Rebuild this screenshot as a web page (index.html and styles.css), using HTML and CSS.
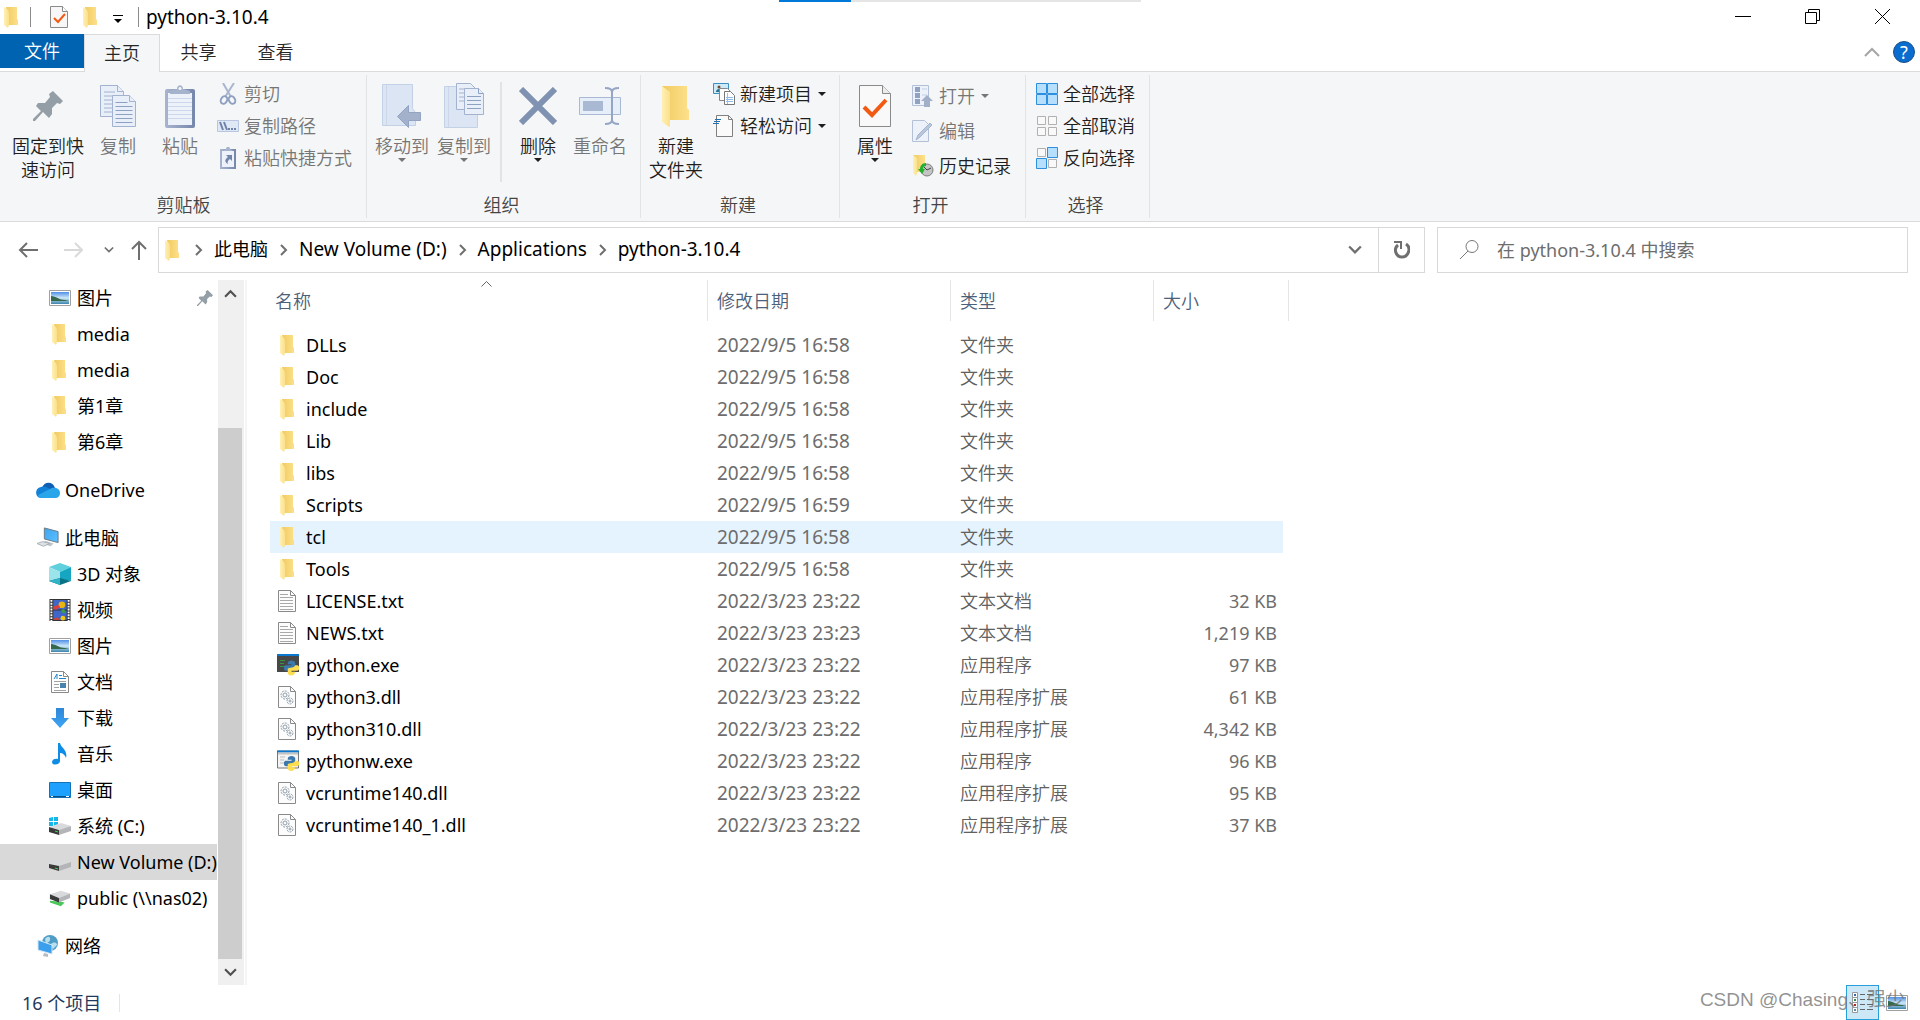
FILE: index.html
```html
<!DOCTYPE html>
<html lang="zh-CN">
<head>
<meta charset="utf-8">
<title>python-3.10.4</title>
<link rel="stylesheet" href="styles.css">
</head>
<body>
<svg class="sprite" aria-hidden="true">
  <defs>
    <linearGradient id="g-back" x1="0" x2="1"><stop offset="0" stop-color="#f0cb62"/><stop offset="1" stop-color="#fde08a"/></linearGradient>
    <linearGradient id="g-flap" x1="0" x2="1"><stop offset="0" stop-color="#fff0b4"/><stop offset="1" stop-color="#fbe08c"/></linearGradient>
    <linearGradient id="g-board" x1="0" x2="1"><stop offset="0" stop-color="#a9b5cf"/><stop offset="1" stop-color="#7486ab"/></linearGradient>
    <linearGradient id="g-sky" x1="0" y1="0" x2="0" y2="1"><stop offset="0" stop-color="#4f8fe6"/><stop offset=".5" stop-color="#cfe8f8"/><stop offset="1" stop-color="#3b84ad"/></linearGradient>
    <linearGradient id="g-screen" x1="0" y1="0" x2="1" y2="1"><stop offset="0" stop-color="#3da5f0"/><stop offset="1" stop-color="#5cc0ff"/></linearGradient>
    <linearGradient id="g-down" x1="0" y1="0" x2="0" y2="1"><stop offset="0" stop-color="#2f86d6"/><stop offset="1" stop-color="#3fa5f5"/></linearGradient>
  </defs>
  <symbol id="folder" viewBox="0 0 14 21"><path d="M2 0h11v12l1 1v5H5z" fill="url(#g-back)"/><path d="M0 0l4 3 1 3v12l-1 3-4-3z" fill="url(#g-flap)"/></symbol>
  <symbol id="folder-lg" viewBox="0 0 30 42"><path d="M1 1h25v22l2 2v10H9z" fill="url(#g-back)"/><path d="M1 1l8 6v34l-1 1-7-5z" fill="url(#g-flap)"/></symbol>
  <symbol id="prop" viewBox="0 0 18 22"><path d="M.5.5h12l5 5v16H.5z" fill="#f7f7f8" stroke="#8a8a8a"/><path d="M12.500.5v5h5" fill="#fff" stroke="#8a8a8a"/><path d="M4 12l4 4 7-8" fill="none" stroke="#f25a13" stroke-width="2"/></symbol>
  <symbol id="prop-lg" viewBox="0 0 32 42"><path d="M.5.5h23l8 8v33H.5z" fill="#f9f9fa" stroke="#8a8a8a"/><path d="M23.500.5v8h8" fill="#ececec" stroke="#8a8a8a"/><path d="M5 22l8 8 14-15" fill="none" stroke="#f25a13" stroke-width="4"/></symbol>
  <symbol id="pin" viewBox="0 0 30 30"><path d="M20 0l10 10-3 3-3-1-5 5v6l-3 4-6-6-8 9-2 0v-2l8-8-5-5 2-3 7 0 5-6-1-3z" fill="#939ea6"/></symbol>
  <symbol id="copy" viewBox="0 0 36 42"><g fill="#e9eff9" stroke="#a3b2cf"><path d="M.5.5h17l6 6v25H.5z"/><path d="M17.500.5v6h6M4 7h11M4 11h11M4 15h8M4 19h8M4 23h8M4 27h8"/><path d="M12.500 10.500h17l6 6v25h-23z"/><path d="M29.500 10.500v6h6"/></g><path d="M15.500 17.500h12M15.500 21.500h17M15.500 25.500h17M15.500 29.500h17M15.500 33.500h17M15.500 37.500h17" stroke="#8fa1c2"/></symbol>
  <symbol id="paste" viewBox="0 0 30 43"><rect y="4" width="30" height="39" rx="2" fill="url(#g-board)"/><path d="M3 8h24v32H3z" fill="#edf2fa"/><path d="M3 13.500h24M3 17.500h24M3 21.500h24M3 25.500h24M3 29.500h24M3 33.500h24" stroke="#cdd9ea"/><path d="M5 9V6l7-2c0-5 6-5 6 0l7 2v3z" fill="#a5b3cc"/><circle cx="15" cy="3.500" r="1.500" fill="#f5f6f7"/></symbol>
  <symbol id="cut" viewBox="0 0 22 22"><g fill="none" stroke="#a9b6d0" stroke-width="2"><path d="M6 0l8 14M17 0L8 14"/><ellipse cx="7" cy="17" rx="3" ry="4" transform="rotate(30 7 17)" stroke="#8fa0c0"/><ellipse cx="15" cy="17" rx="3" ry="4" transform="rotate(-30 15 17)" stroke="#8fa0c0"/></g></symbol>
  <symbol id="path" viewBox="0 0 22 22"><path d="M.5 5.500h21v11H.5z" fill="#dfe8f5" stroke="#b7c5de"/><path d="M3 7l3 8M7 7l3 8" stroke="#6f83aa" stroke-width="2"/><path d="M11 13h2v2h-2zM14 13h2v2h-2zM17 13h2v2h-2z" fill="#6f83aa"/></symbol>
  <symbol id="shortcut" viewBox="0 0 22 22"><path d="M3 2h16v20H3z" fill="url(#g-board)"/><path d="M5 4h12v16H5z" fill="#edf2fa"/><path d="M6 4l3-2c0-3 4-3 4 0l3 2z" fill="#a5b3cc"/><path d="M9 8h6v6l-2-2c-2 1-3 3-2 5-4-2-3-5 0-7z" fill="#7185ab"/></symbol>
  <symbol id="moveto" viewBox="0 0 40 44"><path d="M.5.5h30v24l3 4v13H.5z" fill="#dbe5f3" stroke="#c3d1e6"/><path d="M4.500 1v40" stroke="#cbd7e9"/><path d="M15.500 32.500l11-11v7h12v8h-12v7z" fill="#a3b1ca" stroke="#93a4c2"/></symbol>
  <symbol id="copyto" viewBox="0 0 40 46"><path d="M.5 3.500h28v20l5 3v18H.5z" fill="#dbe5f3" stroke="#c3d1e6"/><path d="M4.500 4v40" stroke="#cbd7e9"/><g fill="#e9eff9" stroke="#a3b2cf"><path d="M12.500.5h14l5 5v21h-19z"/><path d="M15 6h9M15 10h5M15 14h5M15 18h5"/><path d="M20.500 5.500h14l5 5v21h-19z"/><path d="M34.500 5.500v5h5M23 13.500h14M23 17.500h14M23 21.500h14M23 25.500h14" stroke="#8fa1c2"/></g></symbol>
  <symbol id="delete" viewBox="0 0 38 38"><path d="M2 2l34 34M36 2L2 36" stroke="#8092b2" stroke-width="6"/></symbol>
  <symbol id="rename" viewBox="0 0 42 38"><path d="M.5 10.500h41v17H.5z" fill="#e6eefa" stroke="#a9b8d3"/><path d="M4 14h20v10H4z" fill="#a9b8d3"/><path d="M26 1c4 0 7 1 7 4 0-3 3-4 7-4M33 4v30M26 37c4 0 7-1 7-4 0 3 3 4 7 4" fill="none" stroke="#95a6c4" stroke-width="2"/></symbol>
  <symbol id="newitem" viewBox="0 0 22 22"><path d="M.5.5h15v10H.5z" fill="#cfe9f6" stroke="#3d8fbd"/><path d="M3 9c0-4 6-4 6 0z" fill="#25718f"/><circle cx="6" cy="4" r="1.500" fill="#6b4b35"/><path d="M6.500 5.500h8l3 3v9h-11z" fill="#fff" stroke="#888"/><path d="M11.500 8.500h6l4 4v9h-10z" fill="#fff" stroke="#777"/><path d="M13 14.500h7M13 16.500h7M13 18.500h7" stroke="#8db9e6"/><path d="M14.500 10v11" stroke="#f3a0a0"/></symbol>
  <symbol id="easy" viewBox="0 0 22 22"><path d="M3.500.5h12l4 4v17h-16z" fill="#fafafa" stroke="#808080"/><path d="M15.500.5v4h4" fill="none" stroke="#808080"/><path d="M2 4.500h6M1 6.500h6M0 8.500h6" stroke="#1f6fb5"/></symbol>
  <symbol id="open" viewBox="0 0 22 22"><path d="M.5.5h16v20H.5z" fill="#edf2fa" stroke="#b3c0d8"/><path d="M3 2h5v5H3zM3 8h5v5H3zM3 14h5v5H3z" fill="#91a2c1"/><path d="M10 4h5M10 10h5" stroke="#c3cfe2"/><path d="M15 10l6 6h-3v6h-6v-6H9z" fill="#a1afc9"/></symbol>
  <symbol id="edit" viewBox="0 0 22 22"><path d="M.5.5h12l4 4v17H.5z" fill="#edf2fa" stroke="#b3c0d8"/><path d="M4 20l2-5L18 3l2 2L8 17z" fill="#b9c7de" stroke="#a5b5d0"/></symbol>
  <symbol id="history" viewBox="0 0 22 22"><path d="M1 0h12v17H4z" fill="url(#g-back)"/><path d="M1 0l4 3v15l-1 3-3-3z" fill="url(#g-flap)"/><circle cx="15" cy="15" r="6" fill="#c4c4c4" stroke="#7d7d7d"/><path d="M12 12l3 3 4-2" fill="none" stroke="#444"/><path d="M14 8c-4 0-6 3-6 6H6l4 5 3-5h-2c0-2 1-3 3-3z" fill="#23b02e"/></symbol>
  <symbol id="all" viewBox="0 0 22 22"><g fill="#b5dffc" stroke="#2d8fdd"><path d="M.5.500h10v10H.500zM11.500.500h10v10h-10zM.500 11.500h10v10H.500zM11.500 11.500h10v10h-10z"/></g></symbol>
  <symbol id="none" viewBox="0 0 22 22"><g fill="#f9f9f9" stroke="#b1b1b1"><path d="M1.500 1.500h8v8h-8zM12.500 1.500h8v8h-8zM1.500 12.500h8v8h-8zM12.500 12.500h8v8h-8z"/></g></symbol>
  <symbol id="invert" viewBox="0 0 22 22"><path d="M1.500 1.500h8v8h-8zM12.500 12.500h8v8h-8z" fill="#f9f9f9" stroke="#b1b1b1"/><path d="M11.500.500h10v10h-10zM.500 11.500h10v10H.500z" fill="#b5dffc" stroke="#2d8fdd"/></symbol>
  <symbol id="picture" viewBox="0 0 22 16"><path d="M.5.5h21v15H.5z" fill="#fff" stroke="#a0a0a0"/><path d="M2 2h18v12H2z" fill="url(#g-sky)"/><path d="M2 6c5 0 8 4 14 4l4 1H2z" fill="#36694b"/></symbol>
  <symbol id="cloud" viewBox="0 0 24 16"><path d="M6 6C8-1 17-1 19 6l-7 5z" fill="#0f5fb5"/><path d="M5 5c4-1 6 0 9 2l-6 9H5C-1 16-2 6 5 5z" fill="#1180d6"/><path d="M14 7c2-2 10-2 10 4 0 3-2 5-5 5H6c-2 0-4-1-4-3z" fill="#29a5ea"/></symbol>
  <symbol id="pc" viewBox="0 0 24 22"><path d="M8 0l15 4v12L8 12z" fill="url(#g-screen)" stroke="#69747d"/><path d="M9 14l9 3-3 3-10-3z" fill="#bfc5ca"/><path d="M6 15l8 2-7 3-7-3z" fill="#dfe2e5" stroke="#a6adb3"/></symbol>
  <symbol id="cube" viewBox="0 0 22 22"><path d="M11 0l11 4-11 5L0 4z" fill="#5fd0dc"/><path d="M0 4l11 5v7L0 18z" fill="#9be4ec"/><path d="M22 4L11 9v7l11 2z" fill="#16a6c2"/><path d="M0 18l11-3 11 3-11 4z" fill="#0a7285"/><path d="M0 18l11-3v7z" fill="#2fb3c6"/></symbol>
  <symbol id="video" viewBox="0 0 22 23"><path d="M0 0h22v23H0z" fill="#333"/><path d="M4 1h14v10H4zM4 12h14v10H4z" fill="#3f66c9"/><path d="M2 1v22M20 1v22" stroke="#fff" stroke-width="2" stroke-dasharray="2 1"/><circle cx="13" cy="6" r="3.500" fill="#e8b411"/><path d="M4 8l5-2 2 2-3 3H4z" fill="#dc3e40"/><path d="M12 12l3-2 2 4-3 1z" fill="#3b9f45"/><circle cx="14" cy="20" r="2.500" fill="#efc414"/><path d="M5 20l4-1 1 3H5z" fill="#d23f33"/></symbol>
  <symbol id="document" viewBox="0 0 18 22"><path d="M.5.5h12l5 5v16H.5z" fill="#fff" stroke="#8a8a8a"/><path d="M12.500.5v5h5" fill="none" stroke="#8a8a8a"/><path d="M3 8l3-5v5M8 4.500h3M8 7.500h7" fill="none" stroke="#1b86ce"/><path d="M3 10.500h12M3 13.500h5M3 16.500h5M3 19.500h12" stroke="#a3a3a3"/><path d="M9 12h6v5H9z" fill="#4a83ad"/></symbol>
  <symbol id="download" viewBox="0 0 20 20"><path d="M6 0h8v10h5L10 20 1 10h5z" fill="url(#g-down)"/></symbol>
  <symbol id="music" viewBox="0 0 18 22"><path d="M9 0c1 5 8 7 6 15-1-3-3-5-6-5v8c0 4-8 5-8 1 0-3 4-4 6-3V0z" fill="#0f8de6"/></symbol>
  <symbol id="desktop" viewBox="0 0 22 16"><path d="M.5.5h21v15H.5z" fill="#1ea0ff" stroke="#1473b8"/><path d="M1 14.500h20" stroke="#0b4f87"/><path d="M2 14.500h2M17 14.500h3" stroke="#fff"/></symbol>
  <symbol id="drive" viewBox="0 0 22 18"><path d="M0 11l12-4 10 2-11 4z" fill="#d9dadc"/><path d="M10 13l12-4v5l-12 4z" fill="#b4b5b8"/><path d="M0 11l10 2v5L0 15z" fill="#3a3a3a"/><path d="M6 15l3 1" stroke="#3fd055"/></symbol>
  <symbol id="sysdrive" viewBox="0 0 22 18"><path d="M0 1l4-1v4H0zM5 0h4v4H5zM0 5h4v4H0zM5 5h4v4H5z" fill="#12b7ec"/><path d="M0 10l12-4 10 3-11 4z" fill="#d9dadc"/><path d="M10 13l12-4v5l-12 4z" fill="#b4b5b8"/><path d="M0 10l10 3v5L0 15z" fill="#3a3a3a"/><path d="M6 14l3 1" stroke="#3fd055"/></symbol>
  <symbol id="netdrive" viewBox="0 0 24 18"><path d="M1 12l12 1 4 1-4 4-12-4z" fill="#49c759"/><path d="M1 5l12-4 10 3-11 5z" fill="#d9dadc"/><path d="M11 9l12-5v5l-12 5z" fill="#b4b5b8"/><path d="M1 5l10 4v5L1 10z" fill="#3a3a3a"/></symbol>
  <symbol id="network" viewBox="0 0 22 22"><circle cx="13" cy="8" r="8" fill="#4f9cc7"/><path d="M8 4c3-4 6-2 5 1s-3 2-4 4zM14 9c4-3 6-1 6 1l-4 4z" fill="#b7e0ef"/><path d="M1 5l14 5v9L1 15z" fill="#3aa0ee" stroke="#d6e6ef"/><path d="M7 18l4 1v3l-5-1z" fill="#b7bcc0"/></symbol>
  <symbol id="text" viewBox="0 0 18 22"><path d="M.5.5h12l5 5v16H.5z" fill="#fcfcfc" stroke="#8a8a8a"/><path d="M12.500.5v5h5" fill="none" stroke="#8a8a8a"/><path d="M2 4.500h8M2 7.500h13M2 10.500h13M2 13.500h13M2 16.500h13M2 19.500h13" stroke="#a9a9a9"/></symbol>
  <symbol id="dll" viewBox="0 0 18 22"><path d="M.5.5h12l5 5v16H.5z" fill="#fcfcfc" stroke="#8a8a8a"/><path d="M12.500.5v5h5" fill="none" stroke="#8a8a8a"/><g fill="none" stroke="#8c9ba7"><circle cx="7" cy="9" r="2"/><circle cx="7" cy="9" r="4" stroke-dasharray="2 1"/><circle cx="12" cy="15" r="1"/><circle cx="12" cy="15" r="3" stroke-dasharray="2 1"/></g></symbol>
  <symbol id="snake" viewBox="0 0 16 16"><path d="M4 3c0-4 8-4 8 0v4c0 2-6 0-7 4H2c-3 0-3-6 0-6h6V4H4z" fill="#3b79ac"/><path d="M12 12c0 5-8 5-8 1V9c0-2 6 0 8-4h2c3 0 3 6 0 6H8v1z" fill="#ffdd50"/></symbol>
  <symbol id="pyexe" viewBox="0 0 22 22"><path d="M0 0h22v18H0z" fill="#474747"/><path d="M0 0h22v2H0z" fill="#0a78ce"/><path d="M3 6.500h5M3 9.500h4M3 12.500h5" stroke="#37963d"/><use href="#snake" x="7" y="6" width="15" height="16"/></symbol>
  <symbol id="pywexe" viewBox="0 0 22 21"><path d="M.5.5h21v17H.5z" fill="#f4f4f4" stroke="#777"/><path d="M0 0h22v2H0z" fill="#0a78ce"/><path d="M1 2h20v2H1z" fill="#c3c3c3"/><path d="M3 6.500h5M3 9.500h4M3 12.500h5" stroke="#bbb"/><use href="#snake" x="7" y="5" width="15" height="16"/></symbol>
  <symbol id="chev-down" viewBox="0 0 12 8"><path d="M1 1l5 5 5-5" fill="none" stroke="currentColor" stroke-width="2"/></symbol>
  <symbol id="chev-up" viewBox="0 0 12 8"><path d="M1 7l5-5 5 5" fill="none" stroke="currentColor" stroke-width="2"/></symbol>
  <symbol id="chev-right" viewBox="0 0 8 12"><path d="M1 1l5 5-5 5" fill="none" stroke="currentColor" stroke-width="2"/></symbol>
</svg>

<div class="window">
  <div class="progress"><span class="progress-value"></span></div>

  <header class="titlebar">
    <svg class="i-folder"><use href="#folder"/></svg>
    <span class="bar-sep first"></span>
    <button class="plain quick-prop" aria-label="属性"><svg class="i-page"><use href="#prop"/></svg></button>
    <button class="plain" aria-label="新建文件夹"><svg class="i-folder"><use href="#folder"/></svg></button>
    <button class="plain quick-more" aria-label="自定义快速访问工具栏"><svg width="10" height="8"><path d="M0 .5h10" stroke="#000"/><path d="M1 4h8L5 8z"/></svg></button>
    <span class="bar-sep"></span>
    <h1 class="title">python-3.10.4</h1>
    <div class="controls">
      <button class="control" aria-label="最小化"><svg width="16" height="16"><path d="M0 7.500h16" stroke="#000"/></svg></button>
      <button class="control" aria-label="向下还原"><svg width="16" height="16" fill="none" stroke="#000"><path d="M.5 3.500h11v11H.5zM3.500 3.500v-3h11v11h-3"/></svg></button>
      <button class="control" aria-label="关闭"><svg width="16" height="16" stroke="#000"><path d="M0 0l15 15M15 0L0 15"/></svg></button>
    </div>
  </header>

  <nav class="tabs">
    <button class="tab file">文件</button>
    <button class="tab active">主页</button>
    <button class="tab">共享</button>
    <button class="tab">查看</button>
    <div class="tab-tools">
      <button class="plain" aria-label="最小化功能区"><svg width="16" height="10" fill="none" stroke="#a5a5a5" stroke-width="2"><path d="M1 9l7-7 7 7"/></svg></button>
      <button class="help" aria-label="帮助">?</button>
    </div>
  </nav>

  <section class="ribbon">
    <div class="group clipboard">
      <div class="tools">
        <button class="big wide"><span class="art"><svg width="30" height="30"><use href="#pin"/></svg></span>固定到快<br>速访问</button>
        <button class="big off"><span class="art"><svg width="36" height="42"><use href="#copy"/></svg></span>复制</button>
        <button class="big off"><span class="art"><svg width="30" height="43"><use href="#paste"/></svg></span>粘贴</button>
        <div class="stack">
          <button class="small off"><svg><use href="#cut"/></svg>剪切</button>
          <button class="small off"><svg><use href="#path"/></svg>复制路径</button>
          <button class="small off"><svg><use href="#shortcut"/></svg>粘贴快捷方式</button>
        </div>
      </div>
      <div class="group-name">剪贴板</div>
    </div>
    <div class="group organize">
      <div class="tools">
        <button class="big off"><span class="art"><svg width="40" height="44"><use href="#moveto"/></svg></span>移动到<span class="caret"></span></button>
        <button class="big off"><span class="art"><svg width="40" height="46"><use href="#copyto"/></svg></span>复制到<span class="caret"></span></button>
        <span class="tool-sep"></span>
        <button class="big"><span class="art"><svg width="38" height="38"><use href="#delete"/></svg></span>删除<span class="caret"></span></button>
        <button class="big off"><span class="art"><svg width="42" height="38"><use href="#rename"/></svg></span>重命名</button>
      </div>
      <div class="group-name">组织</div>
    </div>
    <div class="group new">
      <div class="tools">
        <button class="big"><span class="art"><svg width="30" height="42"><use href="#folder-lg"/></svg></span>新建<br>文件夹</button>
        <div class="stack">
          <button class="small"><svg><use href="#newitem"/></svg>新建项目<span class="caret"></span></button>
          <button class="small"><svg><use href="#easy"/></svg>轻松访问<span class="caret"></span></button>
        </div>
      </div>
      <div class="group-name">新建</div>
    </div>
    <div class="group opening">
      <div class="tools">
        <button class="big"><span class="art"><svg width="32" height="42"><use href="#prop-lg"/></svg></span>属性<span class="caret"></span></button>
        <div class="stack loose">
          <button class="small off"><svg><use href="#open"/></svg>打开<span class="caret"></span></button>
          <button class="small off"><svg><use href="#edit"/></svg>编辑</button>
          <button class="small"><svg><use href="#history"/></svg>历史记录</button>
        </div>
      </div>
      <div class="group-name">打开</div>
    </div>
    <div class="group select">
      <div class="tools">
        <div class="stack">
          <button class="small"><svg><use href="#all"/></svg>全部选择</button>
          <button class="small"><svg><use href="#none"/></svg>全部取消</button>
          <button class="small"><svg><use href="#invert"/></svg>反向选择</button>
        </div>
      </div>
      <div class="group-name">选择</div>
    </div>
  </section>

  <section class="address-row">
    <div class="history-nav">
      <button class="plain" aria-label="后退"><svg width="20" height="16" fill="none" stroke="#6f6f6f" stroke-width="2"><path d="M9 1L2 8l7 7M2 8h18"/></svg></button>
      <button class="plain forward" aria-label="前进"><svg width="20" height="16" fill="none" stroke="#d9d9d9" stroke-width="2"><path d="M11 1l7 7-7 7M18 8H0"/></svg></button>
      <button class="plain recent" aria-label="最近浏览的位置"><svg width="10" height="8" color="#6f6f6f"><use href="#chev-down"/></svg></button>
      <button class="plain" aria-label="上移"><svg width="16" height="20" fill="none" stroke="#6f6f6f" stroke-width="2"><path d="M1 9l7-7 7 7M8 2v18"/></svg></button>
    </div>
    <div class="address">
      <svg class="i-folder"><use href="#folder"/></svg>
      <svg class="crumb-sep"><use href="#chev-right"/></svg>
      <a href="#">此电脑</a>
      <svg class="crumb-sep"><use href="#chev-right"/></svg>
      <a class="latin" href="#">New Volume (D:)</a>
      <svg class="crumb-sep"><use href="#chev-right"/></svg>
      <a class="latin" href="#">Applications</a>
      <svg class="crumb-sep"><use href="#chev-right"/></svg>
      <a class="latin" href="#">python-3.10.4</a>
      <button class="plain drop" aria-label="上一个位置"><svg width="14" height="10" color="#6f6f6f"><use href="#chev-down"/></svg></button>
      <button class="plain refresh" aria-label="刷新"><svg width="16" height="18" fill="none" stroke="#6f6f6f" stroke-width="3"><path d="M12 3c6 4 2 13-4 13S-1 8 4 4"/><path d="M0 1h7v7" stroke-width="2"/></svg></button>
    </div>
    <label class="search">
      <svg width="20" height="20" fill="none" stroke="#777"><circle cx="13" cy="6.500" r="6"/><path d="M9 11l-8 8"/></svg>
      <input type="text" placeholder="在 python-3.10.4 中搜索" aria-label="搜索">
    </label>
  </section>

  <main class="content">
    <nav class="tree">
      <a class="node" href="#"><svg class="i-pic"><use href="#picture"/></svg>图片<svg class="pinned"><use href="#pin"/></svg></a>
      <a class="node" href="#"><svg class="i-folder"><use href="#folder"/></svg>media</a>
      <a class="node" href="#"><svg class="i-folder"><use href="#folder"/></svg>media</a>
      <a class="node" href="#"><svg class="i-folder"><use href="#folder"/></svg>第1章</a>
      <a class="node" href="#"><svg class="i-folder"><use href="#folder"/></svg>第6章</a>
      <a class="node root" href="#"><svg class="i-cloud"><use href="#cloud"/></svg>OneDrive</a>
      <a class="node root" href="#"><svg class="i-square"><use href="#pc"/></svg>此电脑</a>
      <a class="node" href="#"><svg class="i-square"><use href="#cube"/></svg>3D 对象</a>
      <a class="node" href="#"><svg class="i-square"><use href="#video"/></svg>视频</a>
      <a class="node" href="#"><svg class="i-pic"><use href="#picture"/></svg>图片</a>
      <a class="node" href="#"><svg class="i-page"><use href="#document"/></svg>文档</a>
      <a class="node" href="#"><svg class="i-arrow"><use href="#download"/></svg>下载</a>
      <a class="node" href="#"><svg class="i-page"><use href="#music"/></svg>音乐</a>
      <a class="node" href="#"><svg class="i-pic"><use href="#desktop"/></svg>桌面</a>
      <a class="node" href="#"><svg class="i-drive"><use href="#sysdrive"/></svg>系统 (C:)</a>
      <a class="node selected" href="#"><svg class="i-drive"><use href="#drive"/></svg>New Volume (D:)</a>
      <a class="node" href="#"><svg class="i-drive"><use href="#netdrive"/></svg>public (\\nas02)</a>
      <a class="node root" href="#"><svg class="i-square"><use href="#network"/></svg>网络</a>
    </nav>
    <div class="scrollbar">
      <button class="plain" aria-label="向上滚动"><svg><use href="#chev-up"/></svg></button>
      <div class="track"><div class="thumb"></div></div>
      <button class="plain" aria-label="向下滚动"><svg><use href="#chev-down"/></svg></button>
    </div>

    <div class="list">
      <table class="files">
        <colgroup><col class="c-name"><col class="c-date"><col class="c-type"><col class="c-size"></colgroup>
        <thead>
          <tr><th><svg class="sort" fill="none" stroke="#666"><path d="M.5 6.500l5-5 5 5"/></svg>名称</th><th>修改日期</th><th>类型</th><th>大小</th></tr>
        </thead>
        <tbody>
          <tr><td><span class="file-name"><svg class="i-folder"><use href="#folder"/></svg>DLLs</span></td><td>2022/9/5 16:58</td><td>文件夹</td><td></td></tr>
          <tr><td><span class="file-name"><svg class="i-folder"><use href="#folder"/></svg>Doc</span></td><td>2022/9/5 16:58</td><td>文件夹</td><td></td></tr>
          <tr><td><span class="file-name"><svg class="i-folder"><use href="#folder"/></svg>include</span></td><td>2022/9/5 16:58</td><td>文件夹</td><td></td></tr>
          <tr><td><span class="file-name"><svg class="i-folder"><use href="#folder"/></svg>Lib</span></td><td>2022/9/5 16:58</td><td>文件夹</td><td></td></tr>
          <tr><td><span class="file-name"><svg class="i-folder"><use href="#folder"/></svg>libs</span></td><td>2022/9/5 16:58</td><td>文件夹</td><td></td></tr>
          <tr><td><span class="file-name"><svg class="i-folder"><use href="#folder"/></svg>Scripts</span></td><td>2022/9/5 16:59</td><td>文件夹</td><td></td></tr>
          <tr class="hover"><td><span class="file-name"><svg class="i-folder"><use href="#folder"/></svg>tcl</span></td><td>2022/9/5 16:58</td><td>文件夹</td><td></td></tr>
          <tr><td><span class="file-name"><svg class="i-folder"><use href="#folder"/></svg>Tools</span></td><td>2022/9/5 16:58</td><td>文件夹</td><td></td></tr>
          <tr><td><span class="file-name"><svg class="i-page"><use href="#text"/></svg>LICENSE.txt</span></td><td>2022/3/23 23:22</td><td>文本文档</td><td>32 KB</td></tr>
          <tr><td><span class="file-name"><svg class="i-page"><use href="#text"/></svg>NEWS.txt</span></td><td>2022/3/23 23:23</td><td>文本文档</td><td>1,219 KB</td></tr>
          <tr><td><span class="file-name"><svg class="i-square"><use href="#pyexe"/></svg>python.exe</span></td><td>2022/3/23 23:22</td><td>应用程序</td><td>97 KB</td></tr>
          <tr><td><span class="file-name"><svg class="i-page"><use href="#dll"/></svg>python3.dll</span></td><td>2022/3/23 23:22</td><td>应用程序扩展</td><td>61 KB</td></tr>
          <tr><td><span class="file-name"><svg class="i-page"><use href="#dll"/></svg>python310.dll</span></td><td>2022/3/23 23:22</td><td>应用程序扩展</td><td>4,342 KB</td></tr>
          <tr><td><span class="file-name"><svg class="i-square"><use href="#pywexe"/></svg>pythonw.exe</span></td><td>2022/3/23 23:22</td><td>应用程序</td><td>96 KB</td></tr>
          <tr><td><span class="file-name"><svg class="i-page"><use href="#dll"/></svg>vcruntime140.dll</span></td><td>2022/3/23 23:22</td><td>应用程序扩展</td><td>95 KB</td></tr>
          <tr><td><span class="file-name"><svg class="i-page"><use href="#dll"/></svg>vcruntime140_1.dll</span></td><td>2022/3/23 23:22</td><td>应用程序扩展</td><td>37 KB</td></tr>
        </tbody>
      </table>
    </div>
  </main>

  <footer class="status">
    <span>16 个项目</span>
    <span class="status-sep"></span>
    <div class="views">
      <button class="view on" aria-label="详细信息"><svg width="22" height="22"><g fill="#fff" stroke="#999"><path d="M.5.500h5v5h-5zM.5 5.500h5v5h-5zM.5 10.500h5v5h-5zM.5 15.500h5v5h-5z"/></g><path d="M2 2h2v2H2z" fill="#36a"/><path d="M2 7h2v2H2z" fill="#385"/><path d="M2 12h2v2H2z" fill="#b22"/><path d="M2 17h2v2H2z" fill="#58a"/><path d="M8 2.500h5M15 2.500h6M8 7.500h5M15 7.500h6M8 12.500h5M15 12.500h6M8 17.500h5M15 17.500h6" stroke="#666"/></svg></button>
      <button class="view" aria-label="大图标"><svg class="i-pic"><use href="#picture"/></svg></button>
    </div>
  </footer>
  <div class="watermark">CSDN @Chasing、强少</div>
</div>
</body>
</html>
```
FILE: styles.css
```css
* { box-sizing: border-box; }

body {
  margin: 0;
  background: #fff;
  color: #000;
  font: 400 18px/24px "Noto Sans", "Noto Sans CJK SC", sans-serif;
}

button {
  font: inherit;
  color: inherit;
  background: none;
  border: 0;
  padding: 0;
}

a { color: inherit; text-decoration: none; }
svg { display: block; flex: none; }
.sprite { position: absolute; width: 0; height: 0; }
.plain { display: flex; align-items: center; justify-content: center; }
.latin { font-size: 19px; }

.i-folder { width: 14px; height: 21px; }
.i-page { width: 18px; height: 22px; }
.i-square { width: 22px; height: 22px; }
.i-pic { width: 22px; height: 16px; }
.i-cloud { width: 24px; height: 16px; }
.i-arrow { width: 20px; height: 20px; }
.i-drive { width: 22px; height: 18px; }

.window {
  position: relative;
  display: flex;
  flex-direction: column;
  height: 100vh;
  overflow: hidden;
}

.progress {
  position: absolute;
  top: 0;
  left: 779px;
  width: 362px;
  height: 2px;
  background: #e5e5e5;
}
.progress-value { display: block; width: 20%; height: 100%; background: #0078d7; }

/* Title bar */
.titlebar { display: flex; align-items: center; height: 34px; padding-left: 4px; }
.bar-sep { width: 1px; height: 20px; background: #8a8a8a; }
.bar-sep.first { margin-left: 12px; }
.quick-prop { margin: 0 15px 0 19px; }
.quick-more { margin: 4px 15px 0 16px; }
.title { margin: 0 0 0 7px; font-size: 19px; font-weight: inherit; }
.controls { display: flex; margin-left: auto; padding-right: 2px; }
.control { display: flex; align-items: center; justify-content: center; width: 70px; height: 34px; }

/* Tabs */
.tabs {
  display: flex;
  align-items: flex-start;
  height: 38px;
  border-bottom: 1px solid #dadbdc;
  color: #262626;
}
.tab { width: 77px; height: 36px; font-weight: 350; }
.tab.file { width: 84px; height: 34px; background: #0063b1; color: #fff; }
.tab.active {
  width: 76px;
  height: 38px;
  padding-bottom: 2px;
  background: #f5f6f7;
  border: 1px solid #dadbdc;
  border-bottom: 0;
}
.tab-tools { display: flex; align-items: center; gap: 13px; height: 36px; margin-left: auto; padding-right: 5px; }
.help {
  width: 22px;
  height: 22px;
  border: 1px solid #1a4f86;
  border-radius: 50%;
  background: #0a6ccf;
  color: #fff;
  line-height: 20px;
}

/* Ribbon */
.ribbon {
  display: flex;
  height: 150px;
  padding: 3px 0;
  background: #f5f6f7;
  border-bottom: 1px solid #dadbdc;
  color: #1e1e1e;
  font-weight: 350;
}
.group { display: flex; flex-direction: column; justify-content: space-between; padding-left: 4px; border-right: 1px solid #e2e3e4; }
.tools { display: flex; padding-top: 3px; }
.group-name { margin-left: -8px; padding-bottom: 1px; color: #444; text-align: center; }
.clipboard { width: 367px; padding-left: 9px; }
.organize { width: 274px; }
.new { width: 199px; }
.opening { width: 186px; }
.select { width: 124px; }

.big { display: flex; flex-direction: column; align-items: center; width: 62px; white-space: nowrap; }
.big.wide { width: 78px; }
.art { display: flex; align-items: center; justify-content: center; height: 56px; }
.off { color: #767676; }
.caret { border: 4px solid transparent; border-top-color: currentColor; border-bottom: 0; }
.tool-sep { width: 2px; height: 100px; margin: 4px 5px 0; background: #e2e3e4; }

.stack { display: flex; flex-direction: column; padding-left: 6px; }
.small { display: flex; align-items: center; gap: 5px; height: 32px; white-space: nowrap; }
.small svg { width: 22px; height: 22px; }
.small .caret { margin-left: 1px; }
.loose .small { height: 35px; }

/* Address row */
.address-row { display: flex; align-items: center; height: 58px; padding: 0 12px 2px 18px; }
.history-nav { display: flex; align-items: center; width: 130px; margin-right: 10px; }
.forward { margin: 0 20px 0 26px; }
.recent { margin-right: 17px; }
.address { display: flex; flex: 1; align-items: center; height: 46px; padding-left: 6px; border: 1px solid #d9d9d9; }
.address a { padding-bottom: 2px; }
.crumb-sep { width: 8px; height: 12px; margin: 0 11px 0 12px; color: #6f6f6f; }
.i-folder + .crumb-sep { margin-left: 16px; }
.drop { width: 46px; height: 44px; margin-left: auto; }
.refresh { width: 46px; height: 44px; border-left: 1px solid #d9d9d9; }
.search {
  display: flex;
  align-items: center;
  width: 471px;
  height: 46px;
  margin-left: 12px;
  padding-left: 21px;
  border: 1px solid #d9d9d9;
}
.search input { flex: 1; min-width: 0; margin-left: 18px; padding: 0; border: 0; outline: 0; font: inherit; }
.search input::placeholder { color: #6d6d6d; opacity: 1; }

/* Folder tree */
.content { display: flex; flex: 1; min-height: 0; }
.tree { width: 217px; overflow: hidden; }
.node {
  display: grid;
  grid-template-columns: 22px 1fr auto;
  align-items: center;
  gap: 6px;
  height: 36px;
  padding-left: 49px;
  white-space: nowrap;
}
.node svg { justify-self: center; }
.node .i-folder { margin-right: 2px; }
.node.root { grid-template-columns: 24px 1fr; gap: 5px; margin-top: 12px; padding-left: 36px; }
.node.selected { background: #d9d9d9; }
.pinned { width: 16px; height: 16px; margin-right: 4px; }

.scrollbar { display: flex; flex-direction: column; width: 26px; margin-left: 1px; background: #f0f0f0; color: #505050; }
.scrollbar button { width: 25px; height: 26px; }
.scrollbar svg { width: 13px; height: 9px; }
.track { display: flex; flex: 1; flex-direction: column; padding-right: 2px; }
.track::before { content: ""; flex: 3; }
.thumb { flex: 13; background: #cdcdcd; }

/* File list */
.list { flex: 1; margin-left: 1px; padding-left: 23px; border-left: 2px solid #f5f5f5; }
.files { width: 1019px; table-layout: fixed; border-collapse: separate; border-spacing: 0; color: #6d6d6d; }
.c-name { width: 438px; }
.c-date { width: 243px; }
.c-type { width: 203px; }
.c-size { width: 135px; }
th {
  position: relative;
  height: 41px;
  padding: 0 0 0 9px;
  border-right: 1px solid #e5e5e5;
  color: #4c607a;
  font-weight: 350;
  text-align: left;
}
th:first-child { padding-left: 5px; }
.sort { position: absolute; top: 0; left: 211px; width: 12px; height: 8px; }
thead::after { content: ""; display: block; height: 8px; }
td { height: 32px; padding: 0 0 0 9px; white-space: nowrap; }
td:first-child { padding-left: 7px; color: #000; }
td:nth-child(2) { font-size: 19px; }
td:nth-child(3) { color: #606060; font-weight: 350; }
td:last-child { padding-right: 12px; text-align: right; }
.file-name { display: grid; grid-template-columns: 22px 1fr; align-items: center; gap: 7px; }
.file-name svg { justify-self: center; }
.file-name .i-folder, .file-name .i-page { margin-right: 2px; }
.hover td { background: linear-gradient(#e5f3ff, #e5f3ff); }
.hover td:last-child { background-size: 129px 100%; background-repeat: no-repeat; }

/* Status bar */
.status { display: flex; align-items: center; height: 35px; padding-left: 22px; color: #1e395b; }
.status-sep { width: 1px; height: 18px; margin-left: 18px; background: #e5e5e5; }
.views { display: flex; align-items: center; margin-left: auto; padding-right: 6px; }
.view { display: flex; align-items: center; justify-content: center; width: 35px; height: 35px; }
.view.on { width: 33px; background: #cce8f6; border: 1px solid #26a0da; }

.watermark {
  position: absolute;
  right: 15px;
  bottom: 8px;
  color: rgba(110, 110, 110, .75);
  font-family: "Liberation Sans", "Noto Sans CJK SC", sans-serif;
  font-size: 19px;
  pointer-events: none;
}
```
